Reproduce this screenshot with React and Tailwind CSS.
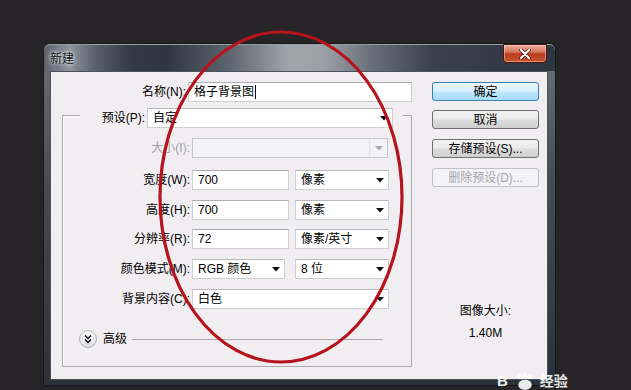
import React from "react"

const Arrow = ({ gray }) => (
  <svg width="8" height="5" viewBox="0 0 8 5" className="shrink-0">
    <polygon points="0,0 8,0 4,4.5" fill={gray ? "#a8a8a8" : "#111"} />
  </svg>
)

function TextBox({ value, width, caret }) {
  return (
    <div
      className={`${width} h-[20px] bg-white border border-[#cfced2] border-t-[#aeadb2] flex items-center pl-[5px] text-black`}
    >
      <span>{value}</span>
      {caret && <span className="w-px h-[14px] bg-black ml-[1px]" />}
    </div>
  )
}

function Select({ value, width }) {
  return (
    <div
      className={`${width} h-[20px] bg-white border border-[#cfced2] border-t-[#b9b8bd] flex items-center justify-between pl-[5px] pr-[4px] text-black`}
    >
      <span>{value}</span>
      <Arrow />
    </div>
  )
}

function Row({ label, children, disabled, mt }) {
  return (
    <div className={`flex items-center h-[20px] ${mt}`}>
      <div className={`w-[127px] text-right ${disabled ? "text-[#a3a1a5]" : "text-black"}`}>{label}</div>
      <div className="ml-[2px] flex items-center gap-[6px]">{children}</div>
    </div>
  )
}

function WinButton({ label, mt, primary, disabled }) {
  const look = primary
    ? "border-[#3c7fb1] bg-[linear-gradient(to_bottom,#eaf6fd_0%,#d9f0fc_45%,#bee6fd_55%,#a7d9f5_100%)] text-black"
    : disabled
      ? "border-[#c2c2c4] bg-[#f3f2f4] text-[#a8a6aa]"
      : "border-[#707070] bg-[linear-gradient(to_bottom,#f2f2f2_0%,#ebebeb_45%,#dddddd_55%,#cfcfcf_100%)] text-black"
  return (
    <div className={`h-[19px] rounded-[3px] border flex items-center justify-center ${look} ${mt}`}>
      {label}
    </div>
  )
}

export default function App() {
  return (
    <div className="relative w-[631px] h-[390px] overflow-hidden bg-[#262427] pt-[43px] pl-[43px] font-['Liberation_Sans','Noto_Sans_CJK_SC',sans-serif] text-[12px] leading-[16px]">
      {/* Dialog window */}
      <div className="w-[513px] h-[343px] rounded-t-[7px] border border-[#15181d] bg-[linear-gradient(to_bottom,#6a717b_0%,#454c56_40%,#2b3139_100%)] flex flex-col pl-[6px] pr-[7px] pb-[5px]">
        {/* Title bar */}
        <div className="-ml-[6px] -mr-[7px] h-[27px] rounded-t-[6px] flex justify-between bg-[linear-gradient(to_right,#5b616b_0%,#8d939b_5%,#5a616b_10%,#333a45_17%,#2f3641_24%,#5d636c_36%,#a1a6ad_48%,#9ba0a7_55%,#6a7079_64%,#3a414c_76%,#2e3540_100%)] border-t border-[#9aa0a8]">
          <div className="pl-[6px] pt-[6px] text-[#101214] [text-shadow:0_0_5px_#e6e9ee,0_0_3px_#e6e9ee]">新建</div>
          <div className="mr-[8px] w-[44px] h-[19px] -mt-px rounded-b-[4px] border border-[#47160e] bg-[linear-gradient(to_bottom,#eab0a0_0%,#d7755c_42%,#bd3d1d_52%,#c6522e_100%)] flex items-center justify-center shadow-[inset_0_0_0_1px_rgba(255,210,190,0.5)]">
            <svg width="12" height="10" viewBox="0 0 12 10">
              <path d="M2 1 L10 9 M10 1 L2 9" stroke="#5a1a0e" strokeWidth="3.6" strokeLinecap="round" />
              <path d="M2 1 L10 9 M10 1 L2 9" stroke="#ffffff" strokeWidth="2.2" strokeLinecap="round" />
            </svg>
          </div>
        </div>

        {/* Client area */}
        <div className="flex-1 border border-[#4b535e] bg-[#f0eef1] flex pt-[10px]">
          {/* Left column */}
          <div className="w-[361px]">
            <div className="flex items-center h-[20px]">
              <div className="w-[139px] text-right text-black">名称(N):</div>
              <div className="ml-[2px]">
                <TextBox value="格子背景图" width="w-[224px]" caret />
              </div>
            </div>

            {/* Group box */}
            <div className="mt-[13px] ml-[11px] w-[350px] h-[252px] border border-[#adabb0] shadow-[inset_1px_1px_0_#ffffff]">
              <div className="-mt-[8px] ml-[17px] w-[322px] h-[20px] bg-[#f0eef1] flex items-center pr-[9px]">
                <div className="w-[65px] text-right text-black">预设(P):</div>
                <div className="ml-[2px] w-[246px] h-[20px] bg-white border border-[#cfced2] border-t-[#b9b8bd] flex items-center justify-between pl-[5px] pr-[4px]">
                  <span>自定</span>
                  <Arrow />
                </div>
              </div>

              <Row label="大小(I):" disabled mt="mt-[10px]">
                <div className="w-[196px] h-[20px] bg-[#f3f2f4] border border-[#c6c5c9] flex items-center justify-end">
                  <div className="w-[18px] h-[18px] border-l border-[#e2e1e4] flex items-center justify-center">
                    <Arrow gray />
                  </div>
                </div>
              </Row>
              <Row label="宽度(W):" mt="mt-[12px]">
                <TextBox value="700" width="w-[97px]" />
                <Select value="像素" width="w-[94px]" />
              </Row>
              <Row label="高度(H):" mt="mt-[10px]">
                <TextBox value="700" width="w-[97px]" />
                <Select value="像素" width="w-[94px]" />
              </Row>
              <Row label="分辨率(R):" mt="mt-[9px]">
                <TextBox value="72" width="w-[97px]" />
                <Select value="像素/英寸" width="w-[94px]" />
              </Row>
              <Row label="颜色模式(M):" mt="mt-[10px]">
                <Select value="RGB 颜色" width="w-[93px]" />
                <div className="ml-[4px]">
                  <Select value="8 位" width="w-[94px]" />
                </div>
              </Row>
              <Row label="背景内容(C):" mt="mt-[10px]">
                <Select value="白色" width="w-[197px]" />
              </Row>

              <div className="mt-[21px] ml-[16px] mr-[28px] flex items-center h-[18px]">
                <div className="shrink-0 w-[18px] h-[18px] rounded-full border border-[#b4b3b7] bg-[linear-gradient(to_bottom,#ffffff,#dcdbe0)] flex items-center justify-center">
                  <svg width="10" height="10" viewBox="0 0 10 10">
                    <path d="M2 1.5 L5 4.5 L8 1.5 M2 5.5 L5 8.5 L8 5.5" stroke="#111" strokeWidth="1.4" fill="none" />
                  </svg>
                </div>
                <span className="ml-[6px] text-black">高级</span>
                <div className="ml-[5px] flex-1 border-t border-[#a9a7ac]" />
              </div>
            </div>
          </div>

          {/* Right column */}
          <div className="ml-[20px] w-[107px] flex flex-col">
            <WinButton label="确定" primary />
            <WinButton label="取消" mt="mt-[9px]" />
            <WinButton label="存储预设(S)..." mt="mt-[10px]" />
            <WinButton label="删除预设(D)..." mt="mt-[10px]" disabled />
            <div className="mt-[116px] text-center text-black">图像大小:</div>
            <div className="mt-[6px] text-center text-black">1.40M</div>
          </div>
        </div>
      </div>

      {/* Red ellipse annotation */}
      <svg className="absolute left-0 top-0 pointer-events-none" width="631" height="390" viewBox="0 0 631 390">
        <ellipse cx="281" cy="197" rx="121" ry="165" fill="none" stroke="#b5141c" strokeWidth="3.2" />
      </svg>

      {/* Watermark */}
      <div className="absolute left-[497px] top-[372px] h-[18px] flex items-center text-white font-bold text-[15px] leading-[18px] opacity-90">
        <span>B</span>
        <svg width="22" height="17" viewBox="0 0 26 20" className="ml-[6px]">
          <circle cx="7" cy="4" r="3" fill="#fff" />
          <circle cx="13" cy="2.5" r="3" fill="#fff" />
          <circle cx="19" cy="4" r="3" fill="#fff" />
          <ellipse cx="13" cy="14" rx="8" ry="6" fill="#fff" />
        </svg>
        <span className="ml-[4px] text-[14px]">经验</span>
      </div>
    </div>
  )
}
